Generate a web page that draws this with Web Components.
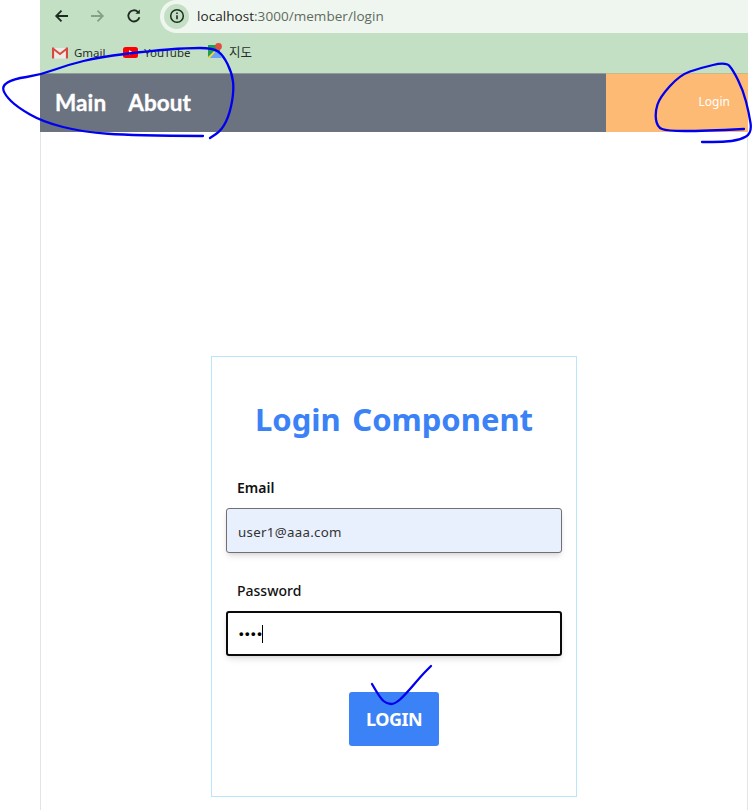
<!DOCTYPE html>
<html lang="ko">
<head>
<meta charset="utf-8">
<title>Login</title>
<style>
html,body{margin:0;padding:0;background:#fff;height:810px;overflow:hidden}
body{font-family:"Noto Sans","Noto Sans CJK KR",sans-serif;position:relative}
</style>
</head>
<body>
<app-shell>
  <browser-bar url-host="localhost" url-path=":3000/member/login"></browser-bar>
  <top-nav></top-nav>
  <login-card></login-card>
</app-shell>
<ink-layer></ink-layer>
<script>
function def(name, html, init){
  customElements.define(name, class extends HTMLElement{
    connectedCallback(){
      if(this.shadowRoot) return;
      const r=this.attachShadow({mode:'open'});
      r.innerHTML=typeof html==='function'?html(this):html;
      if(init) init(r,this);
    }
  });
}
def('app-shell',`<style>
:host{display:block;box-sizing:border-box;margin-left:40px;width:708px;height:810px;border-left:1px solid #e2e5e8;border-right:1px solid #e2e5e8}
</style><slot></slot>`);

def('browser-bar',h=>`<style>
:host{display:block;margin-left:-1px;margin-right:-1px;background:#c4e0c4}
.top{display:flex;height:33px;align-items:center}
.btns{display:flex;width:120px;flex:none;padding:0 0 2px 13px;box-sizing:border-box;gap:17px;align-items:center;height:33px}
.btns svg{width:18px;height:18px;flex:none}
.btns svg:last-child{margin-left:2px}
.pill{flex:1;height:33px;background:#eff6ef;border-radius:17px 0 0 17px;display:flex;align-items:center;gap:8px;padding-left:4px}
.info{width:25px;height:25px;border-radius:50%;background:#c4e0c4;display:flex;align-items:center;justify-content:center;flex:none;margin-bottom:1px}
.url{font:13.5px "Open Sans",sans-serif;color:#1f1f1f;letter-spacing:.05px;padding-bottom:2px}
.url span{color:#5f6b60}
.marks{height:40px;display:flex;align-items:center;padding-left:12px;font:11.5px "Noto Sans","Noto Sans CJK KR",sans-serif;color:#27302a}
.m{display:flex;align-items:center;gap:6px;margin-bottom:1px}
.m svg{flex:none}
.k{font-size:12.5px;margin-top:-3px}
</style>
<div class="top">
  <div class="btns">
    <svg viewBox="0 0 18 18" fill="none" stroke="#1f2a22" stroke-width="1.8"><path d="M15 9H3.5M8.5 3.6 3.2 9l5.3 5.4"/></svg>
    <svg viewBox="0 0 18 18" fill="none" stroke="#85a088" stroke-width="1.8"><path d="M3 9h11.5M9.5 3.6 14.8 9l-5.3 5.4"/></svg>
    <svg viewBox="0 0 18 18" fill="none" stroke="#1f2a22" stroke-width="1.8"><path d="M14.4 10.2A5.6 5.6 0 1 1 13 5"/><path d="M14.8 2.4v4.4h-4.4z" fill="#1f2a22" stroke="none"/></svg>
  </div>
  <div class="pill">
    <div class="info"><svg width="16" height="16" viewBox="0 0 16 16" fill="none" stroke="#1f2a22"><circle cx="8" cy="8" r="6.3" stroke-width="1.5"/><path d="M8 7.2v4" stroke-width="1.6"/><path d="M8 4.4v1.6" stroke-width="1.6"/></svg></div>
    <div class="url">${h.getAttribute('url-host')}<span>${h.getAttribute('url-path')}</span></div>
  </div>
</div>
<div class="marks">
  <div class="m" style="width:71px"><svg width="16" height="12" viewBox="0 0 16 12"><path d="M1 1h14v10.5H1z" fill="#ececE6"/><path d="M1 1.5 8 7l7-5.5" fill="none" stroke="#d9483c" stroke-width="1.8"/><path d="M1 .6v11M15 .6v11" stroke="#d9483c" stroke-width="2.2"/></svg><span>Gmail</span></div>
  <div class="m" style="width:85px"><svg width="15" height="11" viewBox="0 0 15 11"><rect width="15" height="11" rx="2.5" fill="#f00"/><path d="M6 3v5l4-2.5z" fill="#fff"/></svg><span>YouTube</span></div>
  <div class="m"><svg width="15" height="15" viewBox="0 0 15 15" style="margin-top:-4px"><path d="M0 2h12v13H0z" fill="#1f9d55"/><path d="M1 15 9 6l5 9z" fill="#6aa5f5"/><path d="M0 14 6 8l1.2 1.2L2 15H0z" fill="#f5d33f"/><circle cx="10.5" cy="3.5" r="3.4" fill="#e0503f"/></svg><span class="k">지도</span></div>
</div>`);

def('top-nav',`<style>
:host{display:flex;margin-left:-1px;margin-right:-1px;height:59px;background:#6b7280;font-family:Lato,"Noto Sans",sans-serif;box-shadow:inset 0 1px 0 #8f9c96}
.left{flex:1;display:flex;align-items:center;gap:22px;padding-left:15px;color:#fff;font-size:22.5px;font-weight:700;letter-spacing:.1px;-webkit-text-stroke:.35px #fff;padding-bottom:1px}
.right{width:142px;flex:none;background:#fdba74;display:flex;align-items:center;justify-content:flex-end;padding:0 18px 2px 0;box-sizing:border-box;color:#fff;font:12px "Noto Sans",sans-serif;box-shadow:inset 0 1px 0 #c9b888}
</style>
<div class="left"><span>Main</span><span>About</span></div>
<div class="right">Login</div>`);

def('text-field',h=>{
  const focused=h.hasAttribute('focused');
  return `<style>
:host{display:block}
label{display:block;font-size:14px;font-weight:${focused?500:600};line-height:20px;color:#111;padding-left:11px;margin-bottom:10px}
.box{box-sizing:border-box;height:45px;border-radius:3px;padding:2px 11px 0;display:flex;align-items:center;font-size:13.3px;letter-spacing:.3px;color:#333;
 box-shadow:0 4px 6px -1px rgba(0,0,0,.12),0 2px 4px -2px rgba(0,0,0,.1);
 ${focused?'border:2px solid #0a0a0a;background:#fff;padding:0 0 0 11px;':'border:1px solid #6f6f74;background:#e8f0fe;'}}
.dots{font-size:13px;letter-spacing:1.5px;color:#000;font-family:"Liberation Sans",sans-serif;font-weight:700}
.caret{display:inline-block;width:1px;height:18px;background:#000;margin-left:-1px}
</style>
<label>${h.getAttribute('label')}</label>
<div class="box">${focused?`<span class="dots">${h.getAttribute('value')}</span><span class="caret"></span>`:h.getAttribute('value')}</div>`;
});

def('primary-button',`<style>
:host{display:flex;justify-content:center}
button{width:90px;height:54px;border:0;border-radius:3px;background:#3b82f6;color:#fff;font:700 18px "Noto Sans",sans-serif;letter-spacing:-.5px;padding:0}
</style><button><slot></slot></button>`);

def('login-card',`<style>
:host{display:block;box-sizing:border-box;width:366px;height:441px;margin:224px 0 0 170px;border:1px solid #bae6fd;padding:0 14px;background:#fff}
h1{margin:0;padding-top:38px;text-align:center;font:700 31px/49px "Noto Sans",sans-serif;word-spacing:3.5px;color:#3b82f6}
.fields{margin-top:34px;display:flex;flex-direction:column;gap:28px}
primary-button{margin-top:36px}
</style>
<h1>Login Component</h1>
<div class="fields">
<text-field label="Email" value="user1@aaa.com"></text-field>
<text-field label="Password" value="••••" focused></text-field>
</div>
<primary-button>LOGIN</primary-button>`);

const strokes=[
 [[203,136],[133,135.5],[83,132],[43,122],[17,107],[5,95],[2,86],[13,79],[40,75],[67,65],[100,57],[150,51],[187,48],[213,48],[223,55],[232,73],[234,90],[230,113],[222,130],[210,138]],
 [[744,129],[703,131],[667,131],[657,127],[655,112],[660,97],[680,75],[700,68],[726,62],[733,70],[743,90],[749,113],[752,133],[740,140],[723,142],[702,142]],
 [[372,684],[380,698],[387,704],[395,704],[405,695],[422,675],[431,666]]
];
function smooth(p){
  let d=`M${p[0][0]} ${p[0][1]}`;
  for(let i=1;i<p.length-1;i++){
    const mx=(p[i][0]+p[i+1][0])/2,my=(p[i][1]+p[i+1][1])/2;
    d+=`Q${p[i][0]} ${p[i][1]} ${mx} ${my}`;
  }
  const l=p[p.length-1];
  return d+`L${l[0]} ${l[1]}`;
}
def('ink-layer',`<style>
:host{position:absolute;left:0;top:0;width:753px;height:810px;pointer-events:none}
svg{display:block}
</style>
<svg width="753" height="810" fill="none" stroke="#0000f0" stroke-width="2.3" stroke-linecap="round" stroke-linejoin="round">
${strokes.map(s=>`<path d="${smooth(s)}"/>`).join('')}
</svg>`);
</script>
</body>
</html>
